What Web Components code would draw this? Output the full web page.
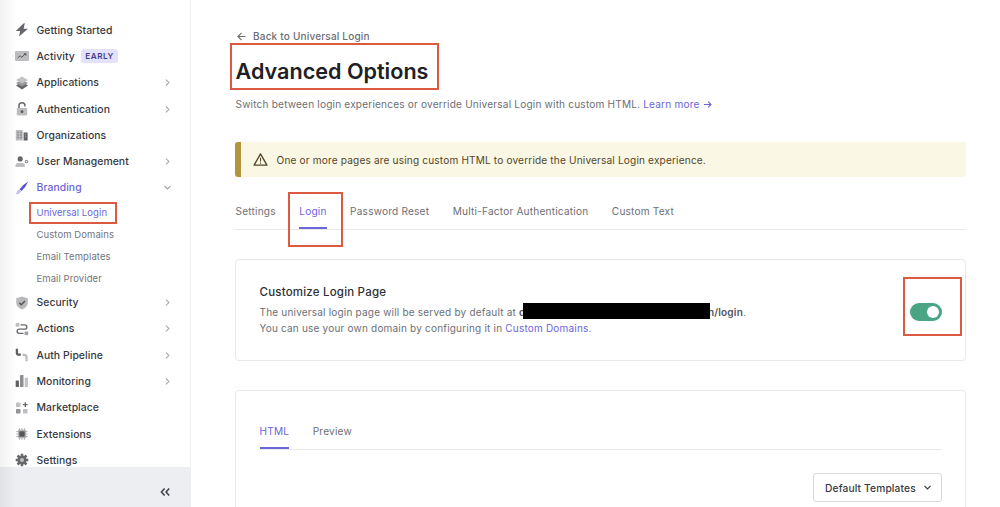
<!DOCTYPE html>
<html lang="en">
<head>
<meta charset="utf-8">
<title>Advanced Options</title>
<style>
  html, body {
    margin: 0;
    height: 100%;
    overflow: hidden;
    background: #fff;
  }
  body {
    font-family: Inter, "Liberation Sans", sans-serif;
    font-size: 10.1px;
    letter-spacing: 0.18px;
    color: #6d6f75;
    --accent: #6c66d9;
    --line: #e9e9eb;
    --mark: #db5a42;
  }
</style>
</head>
<body>
<dashboard-page></dashboard-page>

<script>
(function() {

const icons = {
  bolt: '<path fill="#65666b" d="M8.800 .3 .8 8.100h4.400l-1.200 5.500L13 5.800H8.600L9.800.3z"/>',
  activity: '<rect y="2" width="14" height="10" rx="1" fill="#bdbdbf"/><path d="M2.500 9 5 6.800l1.800 1.400L10 5.200" fill="none" stroke="#55565a"/><path d="M8.500 4.300h2.800V7z" fill="#55565a"/>',
  layers: '<path d="M7 5.800 13 9.500 7 13.500 1 9.500z" fill="#66676b"/><path d="M7 3.500 13 7 7 10.500 1 7z" fill="#97989b"/><path d="M7 .5 13 4 7 7.500 1 4z" fill="#c4c4c6"/>',
  lock: '<rect x="1.800" y="6" width="10.400" height="7.500" rx="1" fill="#bdbdbf"/><path d="M4 6V3.700a3 3 0 0 1 6 0v.8" fill="none" stroke="#66676b" stroke-width="1.500"/><circle cx="7" cy="9.700" r="1.400" fill="#55565a"/>',
  building: '<rect x=".8" y="2" width="7" height="10.500" fill="#bdbdbf"/><path d="M2.500 4.500h1m2 0h1m-4 2.500h1m2 0h1m-4 2.500h1m2 0h1" stroke="#66676b" stroke-width="1.300"/><rect x="8.600" y="4.500" width="4" height="8" fill="#606166"/><path d="M10.600 6.200v1m0 1.300v1" stroke="#bbb"/>',
  users: '<circle cx="5.200" cy="3.900" r="2.600" fill="#66676b"/><path d="M.5 12v-1.600q0-2.400 2.400-2.400h4.600q2.400 0 2.400 2.400V12z" fill="#bdbdbf"/><circle cx="11.500" cy="6.500" r="1.300" fill="none" stroke="#929397" stroke-width="1.100"/>',
  brush: '<path d="M13.200.5Q8 3.500 4.500 8.200l2 1.900Q10.800 6.200 13.200.5z" fill="#5a53d3"/><path d="M4.300 8.500q1.900.3 2 2.100Q4.500 13.500.5 13.300q1.200-.9 1.300-2.300.4-2.200 2.500-2.500z" fill="#c5c2f3"/>',
  shield: '<path d="M7 .6 12.800 2.300v4.500q0 4.300-5.800 6.800Q1.200 11.100 1.200 6.800V2.300z" fill="#b9b9bb"/><path d="m4.300 6.700 2 2L10 5" fill="none" stroke="#55565a" stroke-width="1.600"/>',
  flow: '<rect x=".7" y="1" width="3.600" height="3.600" fill="#bdbdbf"/><rect x="9.600" y="9.500" width="3.600" height="3.600" fill="#a1a1a4"/><path d="M5.500 2.800h4.200a2.200 2.200 0 0 1 0 4.400H4.200a2.100 2.100 0 0 0 0 4.200h4.300" fill="none" stroke="#68696d" stroke-width="1.300"/>',
  pipeline: '<path d="M1.900 .8v3.900q0 2 2 2h2" fill="none" stroke="#5e5f63" stroke-width="2.300"/><path d="M7.500 6.900h1.700q2.300 0 2.300 2.300v4" fill="none" stroke="#bdbdbf" stroke-width="2.300"/>',
  bars: '<rect x=".7" y="6.500" width="3.200" height="6.500" rx=".6" fill="#5e5f63"/><rect x="5" y="1" width="3.500" height="12" rx=".6" fill="#8d8e92"/><rect x="9.700" y="3.800" width="3.300" height="9.200" rx=".6" fill="#c4c4c6"/>',
  market: '<rect x="1" y="1.500" width="4.500" height="4.500" rx=".6" fill="#c0c0c2"/><rect x="1" y="8" width="4.500" height="4.500" rx=".6" fill="#929397"/><rect x="8" y="8" width="4.500" height="4.500" rx=".6" fill="#c0c0c2"/><path d="M10.300 1.300v4.600M8 3.600h4.600" stroke="#66676b" stroke-width="1.300"/>',
  chip: '<path d="M4.500 1.300v11.400M7 1.300v11.400m2.500-11.400v11.400M1.300 4.500h11.400M1.300 7h11.400M1.300 9.500h11.400" stroke="#b4b4b7" stroke-width="1.200"/><rect x="2.800" y="2.800" width="8.400" height="8.400" rx="1" fill="#b4b4b7"/><rect x="4.300" y="4.300" width="5.400" height="5.400" fill="#55565a"/>',
  gear: '<path d="M7 .7v12.600M.7 7h12.600M2.500 2.500l9 9m0-9-9 9" stroke="#66676b" stroke-width="2.500"/><circle cx="7" cy="7" r="4.500" fill="#66676b"/><circle cx="7" cy="7" r="2.100" fill="#bcbcbf"/>',
  right: '<path d="m5.300 4 3.200 3-3.200 3" fill="none" stroke="currentColor" stroke-width="1.100"/>',
  down: '<path d="m3.700 5.300 3.300 3.200 3.300-3.200" fill="none" stroke="currentColor" stroke-width="1.300"/>',
  collapse: '<path d="M6.600 3.400 3.400 7l3.200 3.600m4.600-7.200L8 7l3.200 3.600" fill="none" stroke="currentColor" stroke-width="1.500"/>',
  back: '<path d="M12 7H2.500m4.500-4.500L2.500 7 7 11.500" fill="none" stroke="currentColor" stroke-width="1.400"/>',
  forward: '<path d="M1.500 7h11M8 2.500 12.500 7 8 11.500" fill="none" stroke="currentColor" stroke-width="1.700"/>',
  warning: '<path d="M7 1.700 13 12.300H1z" fill="none" stroke="currentColor" stroke-width="1.250" stroke-linejoin="round"/><path d="M7 5.300v3.500M7 9.800v1.100" stroke="currentColor"/>'
};

// Small base class, every element only brings its own template
function define(name, html, setup) {
  const tmpl = document.createElement('template');
  tmpl.innerHTML = html.trim();
  customElements.define(name, class extends HTMLElement {
    constructor() {
      super();
      this.attachShadow({mode: 'open'}).appendChild(tmpl.content.cloneNode(true));
    }
    connectedCallback() {
      if (setup) setup(this, this.shadowRoot);
    }
  });
}

define('ui-icon', `
  <style>
    :host { display: inline-block; width: 14px; height: 14px; flex: none; }
    svg { display: block; width: 100%; height: 100%; overflow: visible; }
  </style>
  <svg viewBox="0 0 14 14"></svg>
`, (el, root) => {
  root.querySelector('svg').innerHTML = icons[el.getAttribute('name')] || '';
});

define('nav-item', `
  <style>
    :host { display: block; color: #36383e; }
    .row { display: flex; align-items: center; height: 26.3px; padding: 0 16px 0 15px; }
    .label { margin-left: 7.5px; font-size: 10.4px; font-weight: 500; letter-spacing: 0.06px; white-space: nowrap; }
    .arrow { width: 13px; height: 13px; margin-left: auto; color: #a0a1a6; }
    :host([active]) { color: var(--accent); }
    :host([leaf]) .arrow { display: none; }
  </style>
  <div class="row">
    <ui-icon class="icon"></ui-icon>
    <span class="label"></span>
    <slot name="badge"></slot>
    <ui-icon class="arrow" name="right"></ui-icon>
  </div>
  <slot></slot>
`, (el, root) => {
  root.querySelector('.icon').outerHTML = '<ui-icon name="' + el.getAttribute('icon') + '"></ui-icon>';
  root.querySelector('.label').textContent = el.getAttribute('label');
  if (el.hasAttribute('active')) {
    root.querySelector('.arrow').outerHTML = '<ui-icon class="arrow" name="down"></ui-icon>';
  }
});

define('nav-sub', `
  <style>
    :host { display: flex; align-items: center; height: 22.1px; padding-left: 36.5px; color: #73757a; font-size: 9.5px; letter-spacing: 0.08px; }
    :host([active]) { color: var(--accent); }
    span { position: relative; white-space: nowrap; }
  </style>
  <span><slot></slot></span>
`);

define('early-badge', `
  <style>
    :host { display: block; margin-left: 6px; padding: 0 4px 0 4.5px; border-radius: 3px; background: #e4e2fb; color: #443f8c; font-size: 8.2px; font-weight: 600; letter-spacing: 0.5px; line-height: 14px; }
  </style>
  <slot></slot>
`);

define('side-nav', `
  <style>
    :host { display: flex; flex-direction: column; box-sizing: border-box; width: 191px; height: 507px; border-right: 1px solid #f0f0f1; background: linear-gradient(to right, #f1f1f1, #fff 17px); }
    .items { flex: 1; min-height: 0; padding-top: 17px; overflow: hidden; }
    .foot { display: flex; align-items: center; justify-content: flex-end; box-sizing: border-box; height: 40px; padding: 9px 18px 0 0; background: linear-gradient(to right, #e1e2e4, #edeef1 17px); color: #3c3e44; }
  </style>
  <div class="items"><slot></slot></div>
  <div class="foot"><ui-icon name="collapse"></ui-icon></div>
`);

// Outline drawn over the content it is placed in
define('mark-box', `
  <style>
    :host { position: absolute; box-sizing: border-box; border: 2px solid var(--mark); pointer-events: none; z-index: 2; }
  </style>
`);

define('page-header', `
  <style>
    :host { display: block; }
    .back { display: flex; align-items: center; gap: 6.5px; height: 14px; font-weight: 500; font-size: 10px; letter-spacing: 0.2px; color: #6b6d73; }
    .back ui-icon { width: 11px; height: 11px; }
    h1 { position: relative; width: max-content; margin: 14px 0 0; color: #1f2025; font-size: 21.6px; line-height: 28px; font-weight: 600; letter-spacing: 0; white-space: nowrap; }
    p { display: flex; align-items: center; gap: 3px; margin: 11.5px 0 0; line-height: 15px; white-space: nowrap; }
  </style>
  <div class="back"><ui-icon name="back"></ui-icon><slot name="back"></slot></div>
  <h1><slot name="title"></slot></h1>
  <p><slot></slot></p>
`);

define('text-link', `
  <style>
    :host { color: var(--accent); white-space: nowrap; }
    ui-icon { display: none; width: 9px; height: 9px; margin-left: 3px; vertical-align: -1px; }
    :host([arrow]) ui-icon { display: inline-block; }
  </style><slot></slot><ui-icon name="forward"></ui-icon>
`);

define('warning-banner', `
  <style>
    :host { display: flex; align-items: center; box-sizing: border-box; height: 35px; padding-left: 12px; border-left: 6px solid #b3953f; border-radius: 3px; background: #faf7e5; color: #544628; letter-spacing: 0.16px; }
    ui-icon { width: 15px; height: 15px; margin-right: 8.5px; }
  </style>
  <ui-icon name="warning"></ui-icon><slot></slot>
`);

define('tab-bar', `
  <style>
    :host { display: flex; gap: 23.5px; height: 35px; padding-left: 0.5px; border-bottom: 1px solid var(--line); letter-spacing: 0.2px; }
  </style>
  <slot></slot>
`);

define('tab-item', `
  <style>
    :host { display: block; position: relative; box-sizing: border-box; height: 35px; line-height: 35px; white-space: nowrap; color: #6d6f75; }
    :host([active]) { color: var(--accent); border-bottom: 2px solid var(--accent); }
  </style>
  <slot></slot>
`);

define('panel-card', `
  <style>
    :host { display: block; box-sizing: border-box; border: 1px solid var(--line); border-radius: 4px; background: #fff; }
  </style>
  <slot></slot>
`);

define('setting-row', `
  <style>
    :host { display: flex; align-items: center; justify-content: space-between; height: 100%; padding: 0 23px 0 23.5px; }
    .body { margin-bottom: 2px; }
    h2 { margin: 0 0 2px; color: #2d2f35; font-size: 11.5px; line-height: 20px; font-weight: 500; letter-spacing: 0.2px; }
    .text { font-size: 10px; letter-spacing: 0.2px; line-height: 16px; white-space: nowrap; }
  </style>
  <div class="body">
    <h2><slot name="title"></slot></h2>
    <div class="text"><slot></slot></div>
  </div>
  <slot name="control"></slot>
`);

define('hidden-domain', `
  <style>
    :host { font-weight: 600; color: #4f5157; }
    .bar { display: inline-block; position: relative; z-index: 1; width: 187px; height: 16px; margin: -10px -2.5px -2.5px -2px; vertical-align: baseline; background: #000; }
  </style><span>d</span><span class="bar"></span><slot></slot>
`);

define('toggle-switch', `
  <style>
    :host { display: flex; justify-content: flex-end; align-items: center; position: relative; box-sizing: border-box; width: 32px; height: 18px; margin-top: 3px; padding: 3px; border-radius: 9px; background: #4aa585; }
    i { width: 12px; height: 12px; border-radius: 50%; background: #fff; }
  </style>
  <i></i><slot></slot>
`);

define('drop-button', `
  <style>
    :host { display: flex; align-items: center; justify-content: space-between; box-sizing: border-box; width: 129px; height: 29px; padding: 0 7.5px 0 11px; border: 1px solid #d9d9dc; border-radius: 3px; color: #36383e; font-size: 10.2px; font-weight: 500; letter-spacing: 0.15px; white-space: nowrap; }
    ui-icon { width: 13px; height: 13px; }
  </style>
  <slot></slot><ui-icon name="down"></ui-icon>
`);

define('dashboard-page', `
  <style>
    :host { display: flex; height: 507px; overflow: hidden; }
    main { width: 731px; padding: 29px 0 0 44px; }
    page-header { padding-left: 0.5px; }
    warning-banner { margin-top: 30.5px; }
    .pages { margin-top: 17px; }
    .setting { height: 102px; margin-top: 29px; }
    .editor { height: 200px; margin-top: 29px; padding: 23px 23px 0; }
    .actions { display: flex; justify-content: flex-end; margin-top: 23px; }
  </style>
  <side-nav>
    <nav-item icon="bolt" label="Getting Started" leaf></nav-item>
    <nav-item icon="activity" label="Activity" leaf><early-badge slot="badge">EARLY</early-badge></nav-item>
    <nav-item icon="layers" label="Applications"></nav-item>
    <nav-item icon="lock" label="Authentication"></nav-item>
    <nav-item icon="building" label="Organizations" leaf></nav-item>
    <nav-item icon="users" label="User Management"></nav-item>
    <nav-item icon="brush" label="Branding" active>
      <nav-sub active>Universal Login<mark-box style="left: -8px; top: -5px; width: 88px; height: 22px"></mark-box></nav-sub>
      <nav-sub>Custom Domains</nav-sub>
      <nav-sub>Email Templates</nav-sub>
      <nav-sub>Email Provider</nav-sub>
    </nav-item>
    <nav-item icon="shield" label="Security"></nav-item>
    <nav-item icon="flow" label="Actions"></nav-item>
    <nav-item icon="pipeline" label="Auth Pipeline"></nav-item>
    <nav-item icon="bars" label="Monitoring"></nav-item>
    <nav-item icon="market" label="Marketplace" leaf></nav-item>
    <nav-item icon="chip" label="Extensions" leaf></nav-item>
    <nav-item icon="gear" label="Settings" leaf></nav-item>
  </side-nav>
  <main>
    <page-header>
      <span slot="back">Back to Universal Login</span>
      <span slot="title">Advanced Options<mark-box style="left: -6px; top: -14px; width: 209px; height: 47px"></mark-box></span>
      <span>Switch between login experiences or override Universal Login with custom HTML.</span>
      <text-link arrow>Learn more</text-link>
    </page-header>
    <warning-banner>One or more pages are using custom HTML to override the Universal Login experience.</warning-banner>
    <tab-bar class="pages">
      <tab-item>Settings</tab-item>
      <tab-item active>Login<mark-box style="left: -11px; top: -2px; width: 55px; height: 55px"></mark-box></tab-item>
      <tab-item>Password Reset</tab-item>
      <tab-item>Multi-Factor Authentication</tab-item>
      <tab-item>Custom Text</tab-item>
    </tab-bar>
    <panel-card class="setting">
      <setting-row>
        <span slot="title">Customize Login Page</span>
        The universal login page will be served by default at <hidden-domain>n/login</hidden-domain>.<br>
        You can use your own domain by configuring it in <text-link>Custom Domains</text-link>.
        <toggle-switch slot="control"><mark-box style="left: -7px; top: -26px; width: 59px; height: 59px"></mark-box></toggle-switch>
      </setting-row>
    </panel-card>
    <panel-card class="editor">
      <tab-bar>
        <tab-item active>HTML</tab-item>
        <tab-item>Preview</tab-item>
      </tab-bar>
      <div class="actions"><drop-button>Default Templates</drop-button></div>
    </panel-card>
  </main>
</dashboard-page>
`);

})();
</script>
</body>
</html>
